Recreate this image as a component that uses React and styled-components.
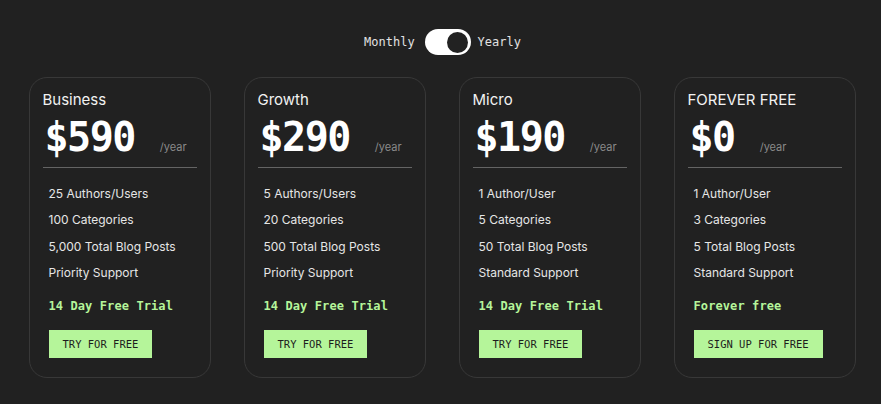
import { useState } from "react";
import styled, { createGlobalStyle } from "styled-components";

const plans = [
  {
    name: "Business",
    price: "$590",
    features: ["25 Authors/Users", "100 Categories", "5,000 Total Blog Posts", "Priority Support"],
    trial: "14 Day Free Trial",
    cta: "TRY FOR FREE",
  },
  {
    name: "Growth",
    price: "$290",
    features: ["5 Authors/Users", "20 Categories", "500 Total Blog Posts", "Priority Support"],
    trial: "14 Day Free Trial",
    cta: "TRY FOR FREE",
  },
  {
    name: "Micro",
    price: "$190",
    features: ["1 Author/User", "5 Categories", "50 Total Blog Posts", "Standard Support"],
    trial: "14 Day Free Trial",
    cta: "TRY FOR FREE",
  },
  {
    name: "FOREVER FREE",
    price: "$0",
    features: ["1 Author/User", "3 Categories", "5 Total Blog Posts", "Standard Support"],
    trial: "Forever free",
    cta: "SIGN UP FOR FREE",
  },
];

function App() {
  const [yearly, setYearly] = useState(true);

  return (
    <>
      <GlobalStyle />
      <Page>
        <ToggleRow>
          <ToggleLabel>Monthly</ToggleLabel>
          <Switch $on={yearly} onClick={() => setYearly(!yearly)}>
            <Knob $on={yearly} />
          </Switch>
          <ToggleLabel>Yearly</ToggleLabel>
        </ToggleRow>

        <Cards>
          {plans.map((plan) => (
            <Card key={plan.name}>
              <PlanName>{plan.name}</PlanName>
              <PriceRow>
                <Price>{plan.price}</Price>
                <Period>/year</Period>
              </PriceRow>
              <Divider />
              <Features>
                {plan.features.map((f) => (
                  <Feature key={f}>{f}</Feature>
                ))}
              </Features>
              <Trial>{plan.trial}</Trial>
              <CtaButton>{plan.cta}</CtaButton>
            </Card>
          ))}
        </Cards>
      </Page>
    </>
  );
}

const GlobalStyle = createGlobalStyle`
  body {
    margin: 0;
    background: #212121;
    font-family: Inter, "Noto Sans", sans-serif;
  }
`;

const Page = styled.div`
  width: 881px;
  height: 404px;
  display: flex;
  flex-direction: column;
  align-items: center;
  padding-top: 29px;
  box-sizing: border-box;
`;

const ToggleRow = styled.div`
  display: flex;
  align-items: center;
  gap: 9px;
  height: 26px;
  padding-left: 4px;
`;

const ToggleLabel = styled.span`
  font-family: "DejaVu Sans Mono", "Liberation Mono", monospace;
  font-size: 12px;
  color: #e2e2e2;
  & + button {
    margin-left: 1px;
  }
`;

const Switch = styled.button`
  width: 46px;
  height: 26px;
  border: none;
  border-radius: 13px;
  background: #ffffff;
  padding: 2px;
  margin-right: -2px;
  display: flex;
  align-items: center;
  justify-content: ${(p) => (p.$on ? "flex-end" : "flex-start")};
  cursor: pointer;
`;

const Knob = styled.span`
  width: 21px;
  height: 21px;
  border-radius: 50%;
  background: #222222;
  margin-right: 1px;
`;

const Cards = styled.div`
  display: flex;
  gap: 33px;
  margin-top: 22px;
  padding-left: 3px;
`;

const Card = styled.div`
  width: 182px;
  height: 301px;
  box-sizing: border-box;
  border: 1px solid #383838;
  border-radius: 18px;
  padding: 12px 13px 0;
  display: flex;
  flex-direction: column;
`;

const PlanName = styled.div`
  font-size: 15px;
  color: #f2f2f2;
  line-height: 20px;
`;

const PriceRow = styled.div`
  display: flex;
  align-items: baseline;
  height: 48px;
  margin-top: 3px;
  padding-left: 2px;
`;

const Price = styled.span`
  font-family: "DejaVu Sans Mono", "Liberation Mono", monospace;
  font-weight: bold;
  font-size: 40px;
  color: #ffffff;
  line-height: 48px;
  letter-spacing: -1.5px;
`;

const Period = styled.span`
  font-size: 11px;
  color: #8a8a8a;
  margin-left: 25px;
`;

const Divider = styled.div`
  height: 1px;
  background: #646464;
  margin-top: 6px;
`;

const Features = styled.ul`
  list-style: none;
  margin: 18px 0 0;
  padding: 0 0 0 6px;
  display: flex;
  flex-direction: column;
  gap: 10.3px;
`;

const Feature = styled.li`
  font-size: 12px;
  line-height: 16px;
  color: #e6e6e6;
`;

const Trial = styled.div`
  font-family: "DejaVu Sans Mono", "Liberation Mono", monospace;
  font-weight: bold;
  font-size: 12px;
  line-height: 16px;
  color: #b5f59a;
  margin: 17px 0 0 6px;
  letter-spacing: 0.1px;
`;

const CtaButton = styled.button`
  align-self: flex-start;
  margin: 16px 0 0 6px;
  height: 28px;
  padding: 0 14px;
  border: none;
  background: #b5f59a;
  color: #1d1d1d;
  font-family: "DejaVu Sans Mono", "Liberation Mono", monospace;
  font-size: 10.5px;
  cursor: pointer;
`;

export default App;
